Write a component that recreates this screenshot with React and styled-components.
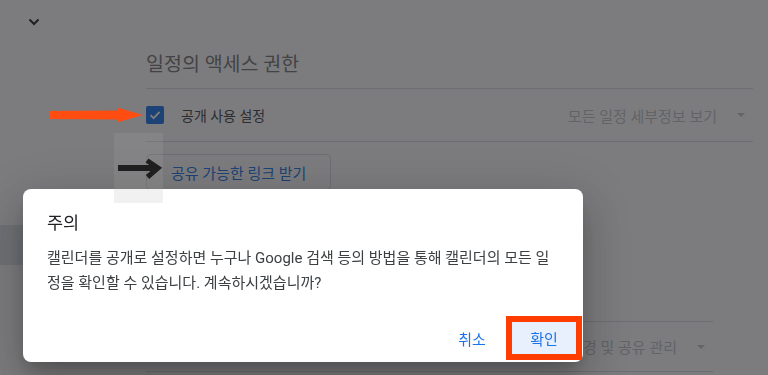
import React from "react";
import styled, { createGlobalStyle } from "styled-components";

const Global = createGlobalStyle`
  html, body { margin: 0; padding: 0; background: #fff; }
  body {
    font-family: Roboto, "Noto Sans CJK KR", sans-serif;
    color: #3c4043;
    -webkit-font-smoothing: antialiased;
  }
  #root { width: 768px; height: 375px; overflow: hidden; position: relative; }
`;

const Page = styled.div`
  display: flex;
  width: 768px;
  height: 375px;
  background: #fff;
  overflow: hidden;
`;

const Sidebar = styled.nav`
  width: 146px;
  flex: none;
  display: flex;
  flex-direction: column;
  padding-top: 18px;
  box-sizing: border-box;
`;

const Collapse = styled.button`
  margin-left: 28px;
  width: 12px;
  height: 8px;
  border: 0;
  padding: 0;
  background: none;
  display: flex;
`;

const NavItem = styled.div`
  margin-top: 199px;
  height: 40px;
  width: 130px;
  background: #dfe4ea;
  border-radius: 0 20px 20px 0;
`;

const Main = styled.main`
  width: 607px;
  flex: none;
  padding-top: 53px;
  display: flex;
  flex-direction: column;
  align-items: flex-start;
`;

const SectionTitle = styled.h2`
  margin: 0;
  width: 100%;
  font-size: 19.5px;
  line-height: 24px;
  font-weight: 400;
  color: #757575;
  padding-bottom: 11px;
  border-bottom: 1px solid #dadce0;
`;

const Row = styled.div`
  display: flex;
  align-items: center;
  justify-content: ${(p) => (p.$end ? "flex-end" : "space-between")};
  width: ${(p) => p.$width || "100%"};
  height: ${(p) => p.$height || 52}px;
  border-bottom: 1px solid #dadce0;
  border-top: ${(p) => (p.$top ? "1px solid #dadce0" : "0")};
  margin-top: ${(p) => p.$mt || 0}px;
`;

const CheckLabel = styled.label`
  display: flex;
  align-items: center;
  gap: 17px;
  font-size: 14px;
  color: #3c4043;
`;

const CheckBox = styled.span`
  width: 18px;
  height: 18px;
  border-radius: 2px;
  background: #1a73e8;
  display: flex;
  align-items: center;
  justify-content: center;
`;

const Select = styled.div`
  height: 35px;
  display: flex;
  align-items: center;
  gap: 20px;
  padding: 0 8px 0 3px;
  font-size: 15px;
  color: #c0c3c6;
`;

const Caret = styled.span`
  width: 0;
  height: 0;
  border-left: 4px solid transparent;
  border-right: 4px solid transparent;
  border-top: 4px solid #c0c3c6;
`;

const LinkButton = styled.button`
  margin-top: 12px;
  height: 36px;
  padding: 0 24px;
  border: 1px solid #dadce0;
  border-radius: 4px;
  background: #fff;
  color: #1a73e8;
  font-family: inherit;
  font-size: 15px;
`;

const Scrim = styled.div`
  position: fixed;
  inset: 0;
  background: rgba(32, 33, 36, 0.59);
  z-index: 10;
`;

const Dialog = styled.div`
  position: fixed;
  left: 23px;
  top: 189px;
  width: 560px;
  box-sizing: border-box;
  padding: 20px 0 8px;
  background: #fff;
  border-radius: 8px;
  box-shadow: 0 11px 15px -7px rgba(0, 0, 0, 0.2),
    0 24px 38px 3px rgba(0, 0, 0, 0.14), 0 9px 46px 8px rgba(0, 0, 0, 0.12);
  z-index: 11;
`;

const DialogTitle = styled.h3`
  margin: 0 0 9px;
  padding: 0 24px;
  font-size: 17.5px;
  line-height: 28px;
  font-weight: 400;
  color: #202124;
`;

const DialogBody = styled.p`
  margin: 0;
  padding: 0 20px 0 24px;
  font-size: 15px;
  line-height: 25px;
  color: #3c4043;
`;

const Actions = styled.div`
  display: flex;
  justify-content: flex-end;
  gap: 8px;
  padding-right: 7px;
  margin-top: 26px;
`;

const TextButton = styled.button`
  min-width: 64px;
  height: 32px;
  padding: 0 8px;
  border: 0;
  border-radius: ${(p) => (p.$marked ? 0 : 4)}px;
  background: ${(p) => (p.$focused ? "#e8f0fe" : "transparent")};
  color: #1a73e8;
  font-family: inherit;
  font-size: 15px;
  font-weight: 400;
  outline: ${(p) => (p.$marked ? "6px solid #ff3d00" : "none")};
`;

const Mark = styled.svg`
  position: fixed;
  z-index: 20;
  left: ${(p) => p.$x}px;
  top: ${(p) => p.$y}px;
`;

const Highlight = styled.div`
  position: fixed;
  z-index: 20;
  left: 114px;
  top: 133px;
  width: 49px;
  height: 70px;
  background: rgba(171, 171, 171, 0.17);
`;

export default function App() {
  return (
    <>
      <Global />
      <Page>
        <Sidebar>
          <Collapse aria-label="접기">
            <svg width="12" height="8" viewBox="0 0 12 8">
              <path d="M1.5 1.5 L6 6 L10.5 1.5" fill="none" stroke="#202124" strokeWidth="2" />
            </svg>
          </Collapse>
          <NavItem />
        </Sidebar>
        <Main>
          <SectionTitle>일정의 액세스 권한</SectionTitle>
          <Row>
            <CheckLabel>
              <CheckBox>
                <svg width="14" height="14" viewBox="0 0 14 14">
                  <path d="M2.5 7.2 L5.6 10.2 L11.6 3.8" fill="none" stroke="#fff" strokeWidth="1.8" />
                </svg>
              </CheckBox>
              공개 사용 설정
            </CheckLabel>
            <Select>
              모든 일정 세부정보 보기
              <Caret />
            </Select>
          </Row>
          <LinkButton>공유 가능한 링크 받기</LinkButton>
          <Row $end $top $width="567px" $height={49} $mt={131}>
            <Select>
              일정 변경 및 공유 관리
              <Caret />
            </Select>
          </Row>
        </Main>
      </Page>
      <Scrim />
      <Dialog role="dialog">
        <DialogTitle>주의</DialogTitle>
        <DialogBody>
          캘린더를 공개로 설정하면 누구나 Google 검색 등의 방법을 통해 캘린더의 모든 일정을 확인할 수 있습니다. 계속하시겠습니까?
        </DialogBody>
        <Actions>
          <TextButton>취소</TextButton>
          <TextButton $focused $marked>확인</TextButton>
        </Actions>
      </Dialog>
      <Highlight />
      <Mark $x={50} $y={107} width="94" height="16" viewBox="0 0 94 16">
        <polygon points="0,4 67,3.5 67,0.5 93,8 67,15.5 67,12.5 0,12" fill="#ff4d12" />
      </Mark>
      <Mark $x={117} $y={158} width="46" height="22" viewBox="0 0 46 22">
        <path d="M1 10 L38 10" stroke="#1f1f1f" strokeWidth="6" fill="none" />
        <path d="M30 2.5 L41 10 L30.5 19" stroke="#1f1f1f" strokeWidth="5" fill="none" strokeLinejoin="miter" />
      </Mark>
    </>
  );
}
